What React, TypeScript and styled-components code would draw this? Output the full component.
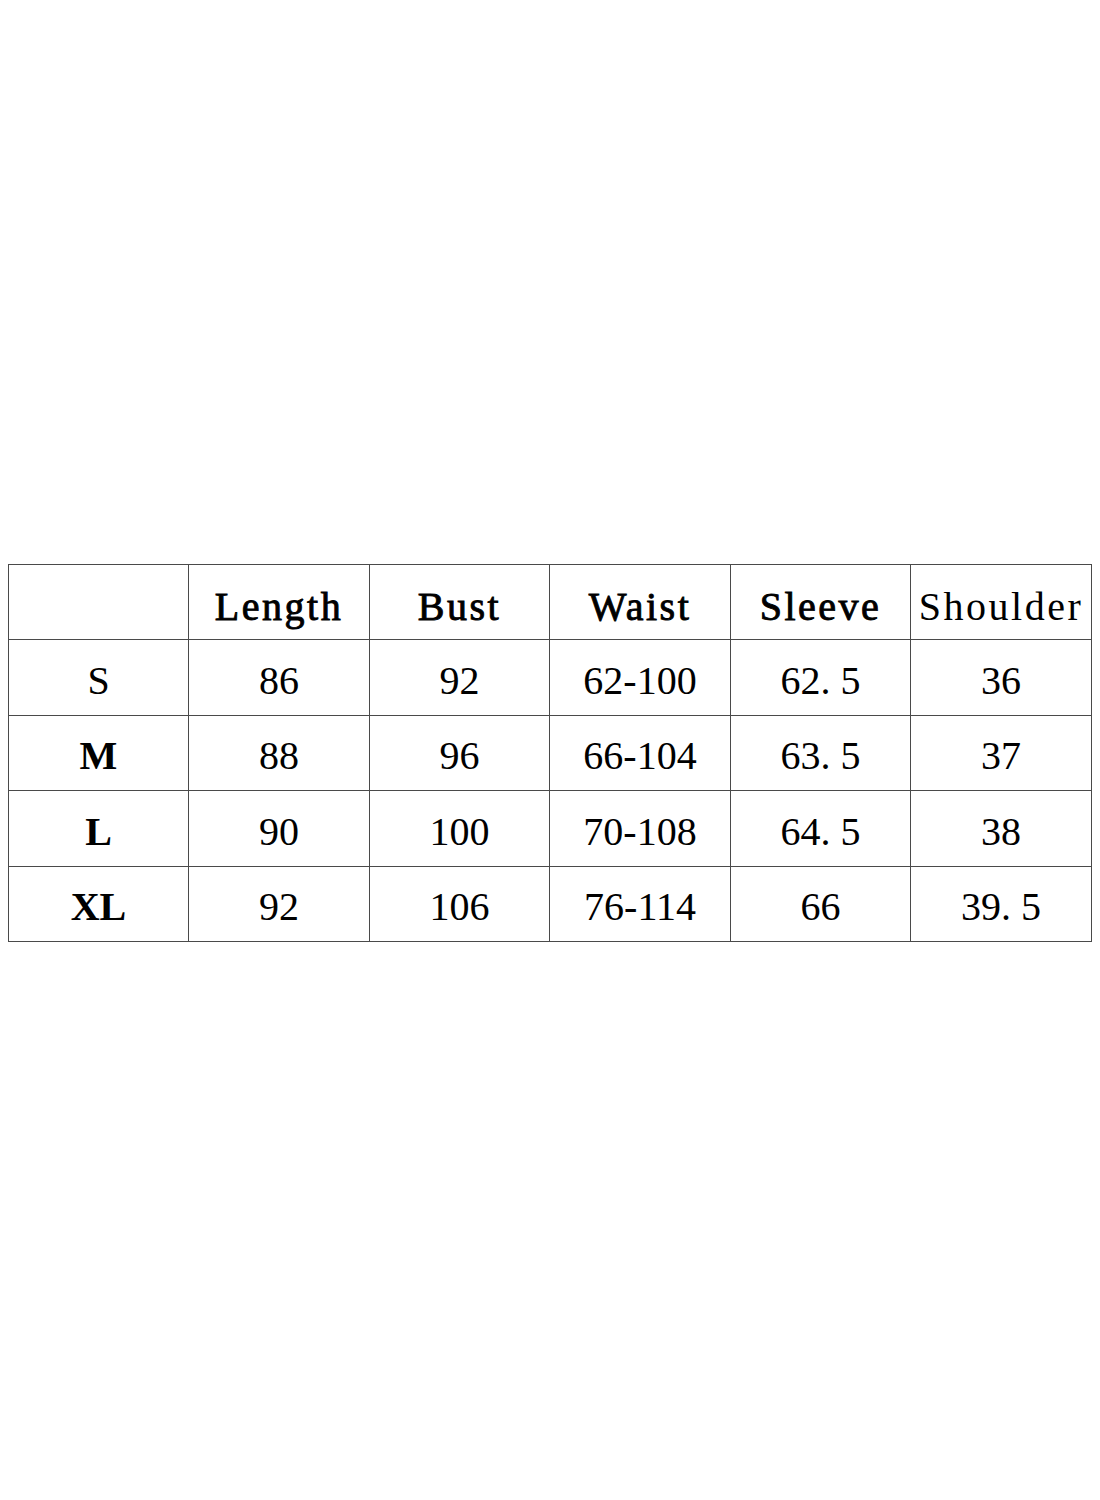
import styled, { createGlobalStyle } from "styled-components";

const GlobalStyle = createGlobalStyle`
  html, body {
    margin: 0;
    padding: 0;
    background: #fff;
  }
`;

const Page = styled.div`
  height: 1500px;
  display: flex;
  align-items: center;
  padding: 6px 9px 0 8px;
  box-sizing: border-box;
`;

const SizeTable = styled.table`
  width: 1083px;
  table-layout: fixed;
  border-collapse: collapse;
  font-family: "Liberation Serif", "Times New Roman", serif;
  color: #000;
`;

const Col = styled.col<{ $wide?: boolean }>`
  width: ${(p) => (p.$wide ? "181px" : "180px")};
`;

const Row = styled.tr`
  height: 75.4px;
`;

const Cell = styled.td<{ $head?: boolean; $bold?: boolean }>`
  border: 1px solid #4a4a4a;
  padding: ${(p) => (p.$head ? "9px 0 0" : "7px 0 0")};
  text-align: center;
  vertical-align: middle;
  font-size: 40px;
  line-height: 1;
  font-weight: ${(p) => (p.$bold ? 700 : 400)};
  letter-spacing: ${(p) => (p.$head ? "2.5px" : "0")};
  white-space: nowrap;
`;

const HeadCell = styled(Cell)<{ $strong?: boolean }>`
  -webkit-text-stroke: ${(p) => (p.$strong ? "0.9px #000" : "0")};
`;

const headers: { label: string; strong: boolean }[] = [
  { label: "", strong: false },
  { label: "Length", strong: true },
  { label: "Bust", strong: true },
  { label: "Waist", strong: true },
  { label: "Sleeve", strong: true },
  { label: "Shoulder", strong: false },
];

const rows: { size: string; bold: boolean; values: string[] }[] = [
  { size: "S", bold: false, values: ["86", "92", "62-100", "62. 5", "36"] },
  { size: "M", bold: true, values: ["88", "96", "66-104", "63. 5", "37"] },
  { size: "L", bold: true, values: ["90", "100", "70-108", "64. 5", "38"] },
  { size: "XL", bold: true, values: ["92", "106", "76-114", "66", "39. 5"] },
];

export default function App() {
  return (
    <>
      <GlobalStyle />
      <Page>
        <SizeTable>
          <colgroup>
            <Col />
            <Col $wide />
            <Col />
            <Col $wide />
            <Col />
            <Col $wide />
          </colgroup>
          <tbody>
            <Row>
              {headers.map((h, i) => (
                <HeadCell key={i} $head $strong={h.strong}>
                  {h.label}
                </HeadCell>
              ))}
            </Row>
            {rows.map((r) => (
              <Row key={r.size}>
                <Cell $bold={r.bold}>{r.size}</Cell>
                {r.values.map((v, i) => (
                  <Cell key={i}>{v}</Cell>
                ))}
              </Row>
            ))}
          </tbody>
        </SizeTable>
      </Page>
    </>
  );
}
